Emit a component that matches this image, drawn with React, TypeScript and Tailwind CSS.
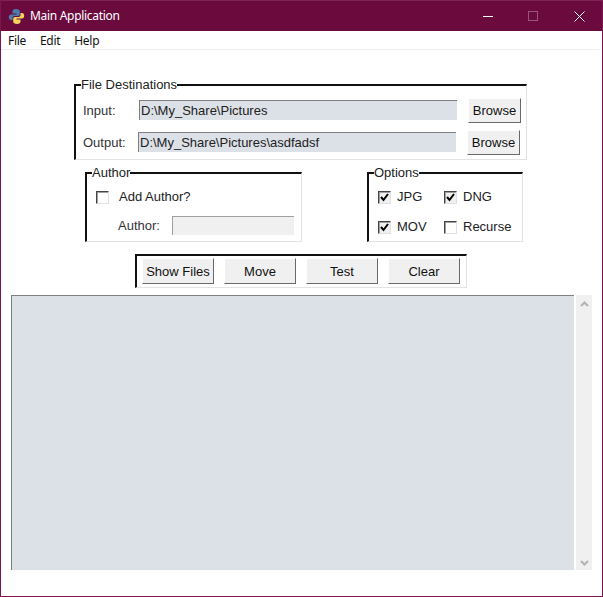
import React from "react";

function Check({ checked, label, className = "" }: { checked?: boolean; label: string; className?: string }) {
  return (
    <div className={"flex items-center gap-[6px] " + className}>
      <div className={"w-[13px] h-[13px] border-t border-l border-t-[#444] border-l-[#444] border-r border-b border-r-[#e0e0e0] border-b-[#e0e0e0] shadow-[inset_1px_1px_0_#a0a0a0] flex items-center justify-center " + (checked ? "bg-[#f0f0f0]" : "bg-white")}>
        {checked && (
          <svg width="9" height="9" viewBox="0 0 9 9">
            <path d="M1 4l2.5 3L8 1" fill="none" stroke="#000" strokeWidth="2" />
          </svg>
        )}
      </div>
      <span>{label}</span>
    </div>
  );
}

function Btn({ children, className = "" }: { children: React.ReactNode; className?: string }) {
  return (
    <div className={"bg-[#f0f0f0] border-t border-l border-t-white border-l-white border-r border-b border-r-[#696969] border-b-[#696969] flex items-center justify-center pt-[1px] text-[13px] text-[#111] " + className}>
      {children}
    </div>
  );
}

function Field({ value, className = "" }: { value: string; className?: string }) {
  return (
    <div className={"h-[20px] bg-[#dce0e7] border-t border-l border-t-[#808080] border-l-[#808080] pl-[1px] flex items-center text-[13px] text-[#222] " + className}>
      {value}
    </div>
  );
}

function Group({ title, className = "", children }: { title: string; className?: string; children: React.ReactNode }) {
  return (
    <fieldset className={"border-t-2 border-l-2 border-r border-b border-t-[#111] border-l-[#111] border-r-[#e3e3e3] border-b-[#e3e3e3] " + className}>
      <legend className="ml-[5px] text-[13px] leading-[14px] text-[#222]">{title}</legend>
      {children}
    </fieldset>
  );
}

export default function App() {
  return (
    <div className="w-[603px] h-[597px] bg-white border border-[#7d1650] border-t-0 flex flex-col overflow-hidden text-[13px] text-[#222] font-['Liberation_Sans',Arial,sans-serif]">
      {/* Title bar */}
      <div className="h-[31px] -mx-px shrink-0 bg-[#6b0a3d] border-t border-[#7d2455] flex items-center text-white">
        <svg width="17" height="17" viewBox="0 0 17 17" className="ml-[8px]">
          <path d="M8 1C5.5 1 4.5 2 4.5 3.5V5.5H8.5V6.5H3C1.5 6.5 .8 7.8 .8 9.2S1.5 12 3 12H4.5V10C4.5 8.8 5.5 8 6.5 8H10C11 8 11.8 7.2 11.8 6V3.5C11.8 2 10.5 1 8 1Z" fill="#4b7cae" />
          <path d="M9 16C11.5 16 12.5 15 12.5 13.5V11.5H8.5V10.5H14C15.5 10.5 16.2 9.2 16.2 7.8S15.5 5 14 5H12.5V7C12.5 8.2 11.5 9 10.5 9H7C6 9 5.2 9.8 5.2 11V13.5C5.2 15 6.5 16 9 16Z" fill="#f3d35c" />
        </svg>
        <span className="ml-[5px] text-[12px] tracking-[-0.3px] font-['Noto_Sans',sans-serif]">Main Application</span>
        <div className="ml-auto flex items-center h-full">
          <div className="w-[46px] flex justify-center"><div className="ml-[2px] w-[10px] h-px bg-white" /></div>
          <div className="w-[46px] flex justify-center"><div className="w-[10px] h-[10px] border border-[#95587a]" /></div>
          <div className="w-[46px] flex justify-center mr-[1px]">
            <svg width="11" height="11" viewBox="0 0 11 11"><path d="M.5.5l10 10M10.5.5l-10 10" stroke="#fff" strokeWidth="1" /></svg>
          </div>
        </div>
      </div>
      {/* Menu */}
      <div className="h-[19px] shrink-0 border-b border-[#f0f0f0] flex items-center pl-[7px] pt-[1px] gap-[14px] text-[12px] tracking-[-0.3px] text-[#111] font-['Noto_Sans',sans-serif]">
        <span>File</span><span>Edit</span><span>Help</span>
      </div>

      {/* File destinations */}
      <Group title="File Destinations" className="mt-[28px] ml-[73px] w-[453px] h-[82px]">
        <div className="flex items-center h-[37px] pt-[3px] mt-[-2px]">
          <span className="w-[56px] ml-[7px] pt-[1px] text-[#333]">Input:</span>
          <Field value="D:\My_Share\Pictures" className="w-[318px]" />
          <Btn className="ml-[11px] w-[53px] h-[25px]">Browse</Btn>
        </div>
        <div className="flex items-center h-[28px] mt-[1px]">
          <span className="w-[55px] ml-[7px] pt-[1px] text-[#333]">Output:</span>
          <Field value="D:\My_Share\Pictures\asdfadsf" className="w-[318px]" />
          <Btn className="ml-[11px] w-[53px] h-[25px]">Browse</Btn>
        </div>
      </Group>

      {/* Author & options */}
      <div className="flex mt-[6px]">
        <Group title="Author" className="ml-[84px] w-[217px] h-[76px]">
          <Check label="Add Author?" className="ml-[9px] mt-[8px] h-[18px] gap-[10px]" />
          <div className="flex items-center mt-[10px]">
            <span className="ml-[31px] w-[54px] text-[#333]">Author:</span>
            <div className="w-[122px] h-[19px] bg-[#f0f0f0] border-t border-l border-t-[#a0a0a0] border-l-[#a0a0a0]" />
          </div>
        </Group>
        <Group title="Options" className="ml-[65px] w-[156px] h-[76px]">
          <div className="grid grid-cols-[66px_1fr] gap-y-[12px] mt-[8px] ml-[9px]">
            <Check checked label="JPG" className="h-[18px]" />
            <Check checked label="DNG" className="h-[18px]" />
            <Check checked label="MOV" className="h-[18px]" />
            <Check label="Recurse" className="h-[18px]" />
          </div>
        </Group>
      </div>

      {/* Buttons */}
      <div className="ml-[134px] mt-[12px] w-[332px] h-[34px] border-t-2 border-l-2 border-r border-b border-t-[#111] border-l-[#111] border-r-[#e3e3e3] border-b-[#e3e3e3] flex items-start pl-[5px] pt-[2px] gap-[10px]">
        <Btn className="w-[72px] h-[26px]">Show Files</Btn>
        <Btn className="w-[72px] h-[26px]">Move</Btn>
        <Btn className="w-[72px] h-[26px]">Test</Btn>
        <Btn className="w-[72px] h-[26px]">Clear</Btn>
      </div>

      {/* Log area */}
      <div className="flex ml-[10px] mt-[7px] h-[275px]">
        <div className="w-[563px] bg-[#dce0e7] border-t border-l border-t-[#808080] border-l-[#808080]" />
        <div className="ml-[2px] w-[16px] bg-[#f0f0f0] flex flex-col justify-between items-center pt-[6px] pb-[4px]">
          <svg width="9" height="6" viewBox="0 0 9 6"><path d="M1 5l3.5-3.5L8 5" fill="none" stroke="#b4b4b4" strokeWidth="2.2" /></svg>
          <svg width="9" height="6" viewBox="0 0 9 6"><path d="M1 1l3.5 3.5L8 1" fill="none" stroke="#b4b4b4" strokeWidth="2.2" /></svg>
        </div>
      </div>
    </div>
  );
}
